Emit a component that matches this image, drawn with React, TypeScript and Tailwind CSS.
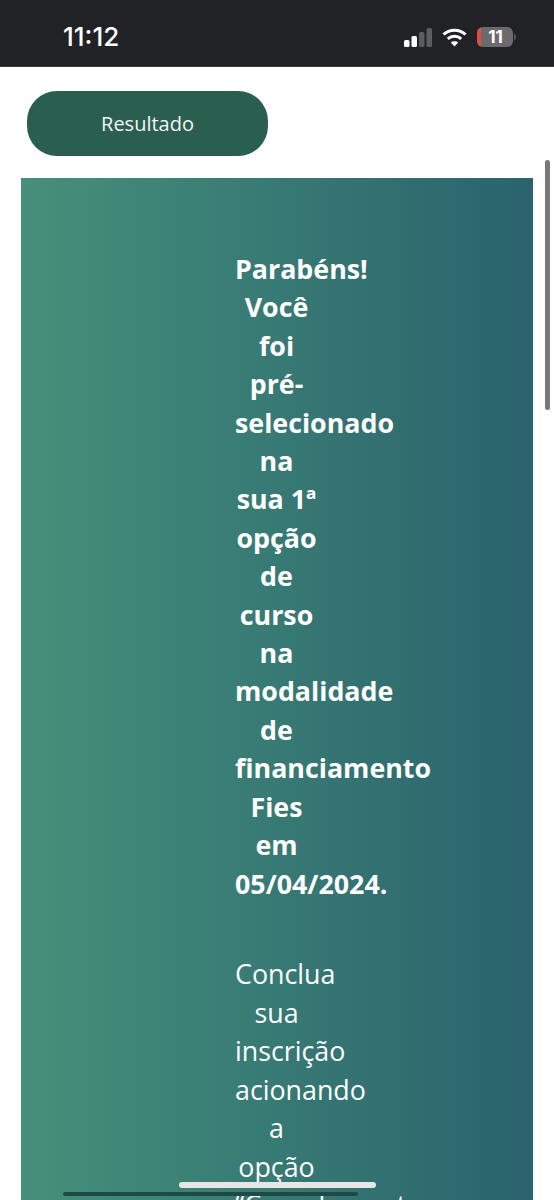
import React from "react";

function SignalIcon() {
  return (
    <svg width="29" height="19" viewBox="0 0 29 19" className="block">
      <rect x="0" y="12" width="5.5" height="7" rx="1.5" fill="#ffffff" />
      <rect x="7.5" y="8" width="5.5" height="11" rx="1.5" fill="#ffffff" />
      <rect x="15" y="4" width="5.5" height="15" rx="1.5" fill="#5c5d60" />
      <rect x="22.5" y="0" width="5.5" height="19" rx="1.5" fill="#5c5d60" />
    </svg>
  );
}

function WifiIcon() {
  return (
    <svg width="25" height="19" viewBox="0 0 25 19" className="block" fill="none" stroke="#ffffff" strokeWidth="3">
      <path d="M1.5 6.5C7.5 0.8 17.5 0.8 23.5 6.5" />
      <path d="M5.8 10.8C9.5 7.4 15.5 7.4 19.2 10.8" />
      <path d="M12.5 18.5L8.8 14.6C10.8 12.9 14.2 12.9 16.2 14.6Z" fill="#ffffff" stroke="none" />
    </svg>
  );
}

function BatteryIcon() {
  return (
    <div className="ml-[1px] flex items-center gap-[1px]">
      <div className="flex h-[20px] w-[36px] items-center justify-center overflow-hidden rounded-[6px] bg-[#6b6b6d]">
        <div className="h-full w-[4px] shrink-0 bg-[#e5493f]" />
        <span className="flex-1 pr-[3px] text-center font-['Inter',sans-serif] text-[17px] leading-none font-bold text-white">11</span>
      </div>
      <div className="h-[6px] w-[2px] rounded-r-[2px] bg-[#55565a]" />
    </div>
  );
}

function StatusBar() {
  return (
    <div className="flex h-[67px] shrink-0 items-center justify-between border-b border-[#3a3b3e] bg-[#212226] pt-[8px] pr-[38px] pl-[63px]">
      <span className="font-['Inter',sans-serif] text-[26px] leading-none font-medium text-white">11:12</span>
      <div className="flex items-center gap-[9px]">
        <SignalIcon />
        <WifiIcon />
        <BatteryIcon />
      </div>
    </div>
  );
}

export default function App() {
  return (
    <div className="relative h-[1200px] w-[554px] overflow-hidden bg-white font-['Open_Sans',sans-serif] text-white">
      <StatusBar />

      <div className="pt-[24px]">
        <button
          className="ml-[27px] flex h-[65px] w-[241px] items-center justify-center rounded-[30px] bg-[#2a5e4e] text-[20px] text-[#f2f6f4]"
          type="button"
        >
          Resultado
        </button>

        <div className="mx-[21px] mt-[22px] h-[1100px] bg-gradient-to-r from-[#46907a] to-[#2a636d] pt-[72px] pl-[214px]">
          <div className="w-[83px] text-center text-[26.8px] leading-[38.4px]">
            <p className="font-bold">
              Parabéns! Você foi pré-selecionado na sua 1ª opção de curso na modalidade de financiamento Fies em 05/04/2024.
            </p>
            <p className="mt-[52px] leading-[38.6px]">
              Conclua sua inscrição acionando a opção “Complementar
            </p>
          </div>
        </div>
      </div>

      {/* scroll indicators on top of the page */}
      <div className="absolute top-[160px] left-[545px] h-[250px] w-[5px] rounded-full bg-[#77787b]" />
      <div className="absolute top-[1192px] left-[63px] h-[4px] w-[295px] rounded-full bg-[#1d4a44]" />
      <div className="absolute top-[1182px] left-[179px] h-[6px] w-[197px] rounded-full bg-[#e6e6e6]" />
    </div>
  );
}
